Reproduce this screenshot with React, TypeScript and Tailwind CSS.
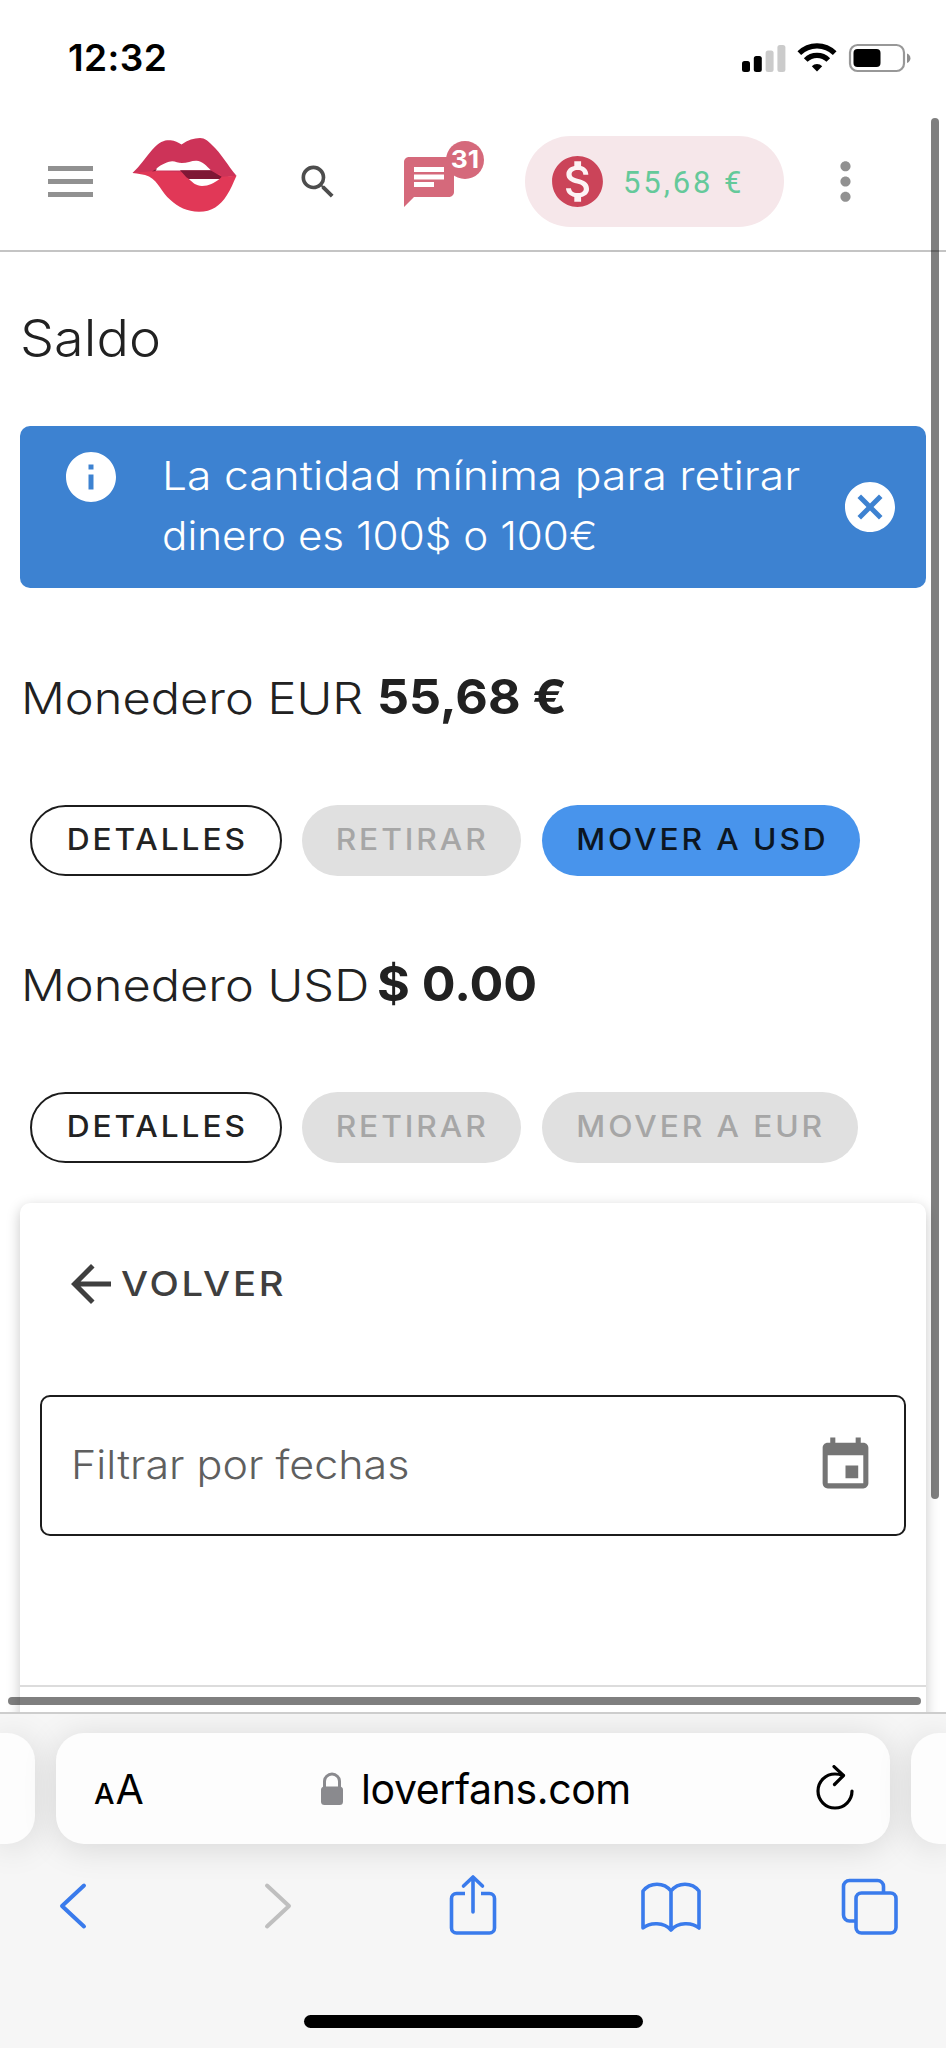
import { clsx } from 'clsx';
import { MdArrowBack, MdCancel, MdChat, MdEvent, MdInfo, MdMonetizationOn, MdMoreVert, MdSearch } from 'react-icons/md';

interface Wallet {
  currency: string;
  amount: string;
  moveLabel: string;
  canMove: boolean;
}

const wallets: Wallet[] = [
  { currency: 'EUR', amount: '55,68 €', moveLabel: 'MOVER A USD', canMove: true },
  { currency: 'USD', amount: '$ 0.00', moveLabel: 'MOVER A EUR', canMove: false },
];

function StatusBar() {
  return (
    <div className="flex h-[116px] shrink-0 items-start justify-between pl-[68px] pr-[35px]">
      <span className="mt-[36px] text-[37px] leading-[44px] font-semibold tracking-[0.4px] text-black">12:32</span>
      <div className="mt-[43px] flex h-[30px] items-start">
        <svg className="h-[30px] w-[46px]" viewBox="0 0 46 30">
          <rect x="1" y="18" width="8" height="11" rx="2.5" fill="#000" />
          <rect x="12.8" y="13" width="8" height="16" rx="2.5" fill="#000" />
          <rect x="24.6" y="7.5" width="8" height="21.5" rx="2.5" fill="#cbcbcb" />
          <rect x="36.4" y="2" width="8" height="27" rx="2.5" fill="#cbcbcb" />
        </svg>
        <svg className="ml-[10px] h-[30px] w-[40px]" viewBox="0 0 40 30">
          <g fill="none" stroke="#000" strokeWidth="5.2">
            <path d="M2.3 10.2a25 25 0 0 1 35.4 0" />
            <path d="M8.7 17a16 16 0 0 1 22.6 0" />
          </g>
          <path d="M20 28.5l-5.2-5.3a7.4 7.4 0 0 1 10.4 0z" fill="#000" />
        </svg>
        <svg className="ml-[11px] h-[30px] w-[63px]" viewBox="0 0 63 30">
          <rect x="2" y="2" width="54" height="26" rx="7.5" fill="none" stroke="#989898" strokeWidth="2.2" />
          <rect x="5.5" y="6" width="27" height="18" rx="4" fill="#000" />
          <path d="M59 10.5c4.6 1.6 4.6 8 0 9.6z" fill="#8c8c8c" />
        </svg>
      </div>
    </div>
  );
}

function LipsLogo() {
  return (
    <svg className="h-[76px] w-[106px]" viewBox="0 0 106 76">
      <path
        d="M0.500 36C8 29 14 20 20 13C28 4 33 3 38.500 3.300C43 3.500 46 5.500 49.500 7.500C56 3 62 1 68 1C73 1 76 4 80 8C89 16 96 29 104.500 38.700L88 41L60 36L20 36Z"
        fill="#cd3358"
      />
      <path
        d="M0.500 36C7 35.500 14 34.500 22 34L88 37L89.500 39.700L104.500 38.700C101 46 99 52 95 58C88 69 80 74.700 67 74.700C55 74.700 46 70 38.500 63C29 55 27 45 17 39.500C12 37 6 37 0.500 36Z"
        fill="#e13857"
      />
      <path d="M23 33.500C25 30 31 27 37 24.800C42 23 45 26 50 26C55 26 60 23.500 64.500 23.700C70 24 75 29 79 33.500Z" fill="#fff" />
      <path d="M20 34.500L25 31.500L23.500 34Z" fill="#7f1735" />
      <path d="M48 33.300H78.500L89.700 39.700L87.500 42H57C53 40 51 36 48 33.300Z" fill="#7f1735" />
      <path d="M57 42H87.500C82 46 77 49 70 49C64 49 60 45 57 42Z" fill="#fff" />
    </svg>
  );
}

function Header() {
  return (
    <header className="flex h-[136px] shrink-0 items-center border-b-2 border-[#c4c4c4] pb-[3px] pl-[48px]">
      <div className="flex w-[45px] flex-col gap-[8px]">
        <span className="h-[5px] bg-[#919191]" />
        <span className="h-[5px] bg-[#919191]" />
        <span className="h-[5px] bg-[#919191]" />
      </div>
      <div className="mb-[13px] ml-[39px]">
        <LipsLogo />
      </div>
      <MdSearch className="ml-[58px] size-[44px] text-[#4d4d4d]" />
      <div className="relative ml-[59px]">
        <MdChat className="size-[60px] text-[#d5697b]" />
        <span className="absolute -top-[11px] left-[47px] flex size-[38px] items-center justify-center rounded-full bg-[#d5697b] text-[24px] leading-none font-bold text-white">
          <span className="scale-x-110">31</span>
        </span>
      </div>
      <div className="ml-[66px] flex h-[91px] w-[259px] items-center rounded-full bg-[#f6e7ea] pl-[22px]">
        <span className="relative flex size-[61px] items-center justify-center">
          <span className="absolute size-[44px] rounded-full bg-[#fdf3f5]" />
          <MdMonetizationOn className="relative size-[61px] text-[#cb4459]" />
        </span>
        <span className="ml-[15px] pt-[2px] font-['Roboto',sans-serif] text-[31px] leading-none tracking-[2.900px] whitespace-nowrap text-[#65c99a]">
          55,68 €
        </span>
      </div>
      <MdMoreVert className="ml-[31px] size-[61px] text-[#919191]" />
    </header>
  );
}

function Pill({ label, variant, width }: { label: string; variant: 'outline' | 'disabled' | 'primary'; width: string }) {
  return (
    <button
      className={clsx(
        'flex h-[71px] items-center justify-center rounded-full pb-px pl-[2px] text-[29.500px] leading-none font-[450] whitespace-nowrap',
        width,
        variant === 'outline' && 'border-2 border-[#1c1c1c] text-[#222222]',
        variant === 'disabled' && 'bg-[#e0e0e0] text-[#a6a6a6]',
        variant === 'primary' && 'bg-[#4894ec] text-[#0c1622]'
      )}
    >
      <span className="scale-x-[1.075]">{label}</span>
    </button>
  );
}

function WalletSection({ wallet }: { wallet: Wallet }) {
  return (
    <section className="h-[287px]">
      <h2 className="flex h-[77px] items-baseline pl-px text-[43.500px] leading-[77px] font-[340] whitespace-nowrap text-[#212121]">
        <span className="w-[356px] origin-left scale-x-[1.12]">Monedero {wallet.currency}</span>
        <strong className="origin-left scale-x-[1.035] text-[48.500px] font-bold">{wallet.amount}</strong>
      </h2>
      <div className="mt-[70px] flex pl-[10px] tracking-[2.700px]">
        <Pill label="DETALLES" variant="outline" width="w-[252px]" />
        <div className="w-[20px]" />
        <Pill label="RETIRAR" variant="disabled" width="w-[219px]" />
        <div className="w-[21px]" />
        <Pill
          label={wallet.moveLabel}
          variant={wallet.canMove ? 'primary' : 'disabled'}
          width={wallet.canMove ? 'w-[318px]' : 'w-[316px]'}
        />
      </div>
    </section>
  );
}

function SafariBar() {
  return (
    <footer className="flex h-[336px] shrink-0 flex-col overflow-hidden border-t-2 border-[#cdcdcd] bg-[#f6f6f6]">
      <div className="mt-[19px] flex h-[111px] shrink-0">
        <div className="w-[35px] rounded-r-[28px] bg-[#fdfdfd] shadow-[0_4px_34px_rgba(0,0,0,0.13)]" />
        <div className="ml-[21px] flex w-[834px] items-center rounded-[28px] bg-[#fdfdfd] px-[38px] text-black shadow-[0_4px_34px_rgba(0,0,0,0.13)]">
          <div className="flex w-[220px] items-baseline pt-[2px] leading-none">
            <span className="text-[29px] font-medium">A</span>
            <span className="ml-[1px] text-[41px]">A</span>
          </div>
          <svg className="ml-[6px] h-[34px] w-[24px]" viewBox="0 0 24 34">
            <path d="M4.500 16V9.500a7.500 7.500 0 0 1 15 0V16" fill="none" stroke="#8a8a8e" strokeWidth="3" />
            <rect x="1" y="14.500" width="22" height="18.500" rx="3.500" fill="#8a8a8e" />
          </svg>
          <span className="ml-[17px] pt-[2px] text-[41px] leading-none tracking-[-0.4px]">loverfans.com</span>
          <svg className="-mr-[4px] ml-auto h-[48px] w-[46px]" viewBox="0 0 46 48" fill="none" stroke="#000" strokeWidth="3.200" strokeLinecap="round" strokeLinejoin="round">
            <path d="M42 26a17 17 0 1 1-17-17q4 0 8 1.500" />
            <path d="M24 1.600L33.500 10.500L24.500 19.500" />
          </svg>
        </div>
        <div className="ml-[21px] w-[35px] rounded-l-[28px] bg-[#fdfdfd] shadow-[0_4px_34px_rgba(0,0,0,0.13)]" />
      </div>
      <nav className="mt-[29px] flex h-[66px] shrink-0 items-center pl-[58px]">
        <svg className="h-[50px] w-[30px]" viewBox="0 0 30 50" fill="none" stroke="#3a7bec" strokeWidth="4" strokeLinecap="round" strokeLinejoin="round">
          <path d="M26 4.500L4 25l22 20.500" />
        </svg>
        <svg className="ml-[175px] h-[50px] w-[30px]" viewBox="0 0 30 50" fill="none" stroke="#bfbfbf" strokeWidth="4" strokeLinecap="round" strokeLinejoin="round">
          <path d="M4 4.500L26 25 4 45.500" />
        </svg>
        <svg className="ml-[155px] h-[66px] w-[50px]" viewBox="0 0 50 66" fill="none" stroke="#3a7bec" strokeWidth="3.600" strokeLinejoin="round">
          <path d="M17 20.500H8.500a5 5 0 0 0-5 5V55a5 5 0 0 0 5 5h33a5 5 0 0 0 5-5V25.500a5 5 0 0 0-5-5H33" />
          <path d="M25 39V5M15.500 13L25 4l9.500 9" strokeLinecap="round" />
        </svg>
        <svg className="ml-[142px] h-[56px] w-[62px]" viewBox="0 0 62 56" fill="none" stroke="#3a7bec" strokeWidth="3.600" strokeLinecap="round" strokeLinejoin="round">
          <path d="M31 13C24 4 10 4 3 13v37c7-6 21-6 28 2 7-8 21-8 28-2V13C52 4 38 4 31 13zM31 13v38" />
        </svg>
        <svg className="ml-[137px] h-[60px] w-[60px]" viewBox="0 0 60 60" fill="none" stroke="#3a7bec" strokeWidth="3.600" strokeLinejoin="round">
          <rect x="17" y="17" width="40" height="40" rx="5.500" />
          <path d="M17 45h-6.500a6 6 0 0 1-6-6V10.500a6 6 0 0 1 6-6h28a6 6 0 0 1 6 6V17" />
        </svg>
      </nav>
      <div className="mx-auto mt-[76px] h-[13px] w-[339px] shrink-0 rounded-full bg-black" />
    </footer>
  );
}

export default function App() {
  return (
    <div className="relative flex h-[2048px] w-[946px] flex-col overflow-hidden bg-white font-['Inter','Liberation_Sans',sans-serif]">
      <StatusBar />
      <Header />

      <main className="flex h-[1460px] shrink-0 flex-col overflow-hidden px-[20px]">
        <h1 className="mt-[56px] h-[60px] w-[200px] origin-left scale-x-[1.08] text-[50px] leading-[60px] font-[330] text-[#212121]">
          Saldo
        </h1>

        {/* Aviso de cantidad mínima */}
        <div className="mt-[58px] flex h-[162px] shrink-0 rounded-[10px] bg-[#3d82d1] pl-[41px] text-white">
          <MdInfo className="mt-[21px] size-[60px]" />
          <p className="mt-[20px] ml-[41px] flex w-[672px] flex-col text-[40px] leading-[60px] font-light whitespace-nowrap">
            <span className="origin-left scale-x-[1.11]">La cantidad mínima para retirar</span>
            <span className="origin-left scale-x-[1.055]">dinero es 100$ o 100€</span>
          </p>
          <MdCancel className="mt-[51px] ml-[6px] size-[60px]" />
        </div>

        <div className="mt-[70px]">
          {wallets.map(wallet => (
            <WalletSection key={wallet.currency} wallet={wallet} />
          ))}
        </div>

        <div className="-mt-[29px] h-[600px] shrink-0 rounded-t-[10px] bg-white px-[20px] pt-[50px] shadow-[0_4px_14px_rgba(0,0,0,0.22)]">
          <button className="flex h-[62px] items-center pl-[21px] text-[34px] leading-none font-[450] tracking-[2.400px] text-[#3f3f3f]">
            <MdArrowBack className="size-[60px]" />
            <span className="origin-left scale-x-[1.125]">VOLVER</span>
          </button>
          <div className="mt-[80px] flex h-[141px] items-center justify-between rounded-[10px] border-2 border-[#1c1c1c] pr-[28px] pb-px pl-[29px]">
            <span className="origin-left scale-x-[1.075] text-[40px] leading-none font-light text-[#5f5f5f]">Filtrar por fechas</span>
            <MdEvent className="size-[61px] text-[#757575]" />
          </div>
          <div className="-mx-[20px] mt-[149px] h-[2px] bg-[#dcdcdc]" />
        </div>
      </main>

      <SafariBar />

      {/* Barras de desplazamiento superpuestas */}
      <div className="absolute top-[118px] left-[931px] h-[1381px] w-[8px] rounded-full bg-black/50" />
      <div className="absolute top-[1697px] left-[8px] h-[8px] w-[913px] rounded-full bg-black/50" />
    </div>
  );
}
